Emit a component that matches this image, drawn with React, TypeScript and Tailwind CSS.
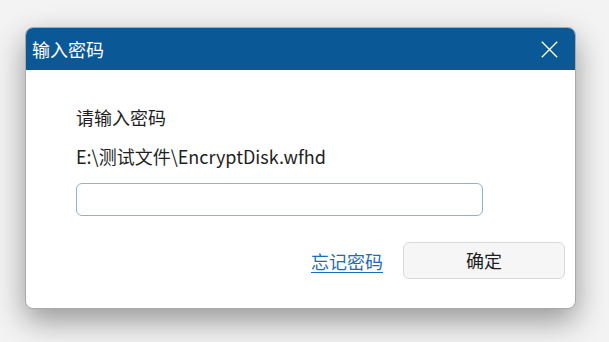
import React from "react";

export default function App() {
  return (
    <div className="w-[609px] h-[342px] bg-[#f3f3f3] pt-[27px] pl-[25px] overflow-hidden" style={{ fontFamily: '"Microsoft YaHei", "Noto Sans CJK SC", "Noto Sans", sans-serif' }}>
      <div className="w-[551px] h-[282px] bg-white border border-[#a9a9a9] rounded-[8px] overflow-hidden shadow-[0_12px_30px_rgba(0,0,0,0.38)] flex flex-col">
        <div className="h-[42px] bg-[#0a5996] flex items-center justify-between pl-[6px] pr-[17px] shrink-0">
          <span className="text-white text-[18px] leading-none">输入密码</span>
          <svg width="17" height="17" viewBox="0 0 17 17">
            <path d="M0.8 0.8 L16.2 16.2 M16.2 0.8 L0.8 16.2" stroke="#ffffff" strokeWidth="1.3" fill="none" />
          </svg>
        </div>
        <div className="flex flex-col pl-[50px] pr-[10px] pt-[37px]">
          <div className="text-[18px] leading-[20px] text-[#1f1f1f]">请输入密码</div>
          <div className="text-[18px] leading-[20px] text-[#1f1f1f] mt-[19px]">E:\测试文件\EncryptDisk.wfhd</div>
          <div className="w-[407px] h-[33px] mt-[17px] border border-[#8cb3d6] rounded-[6px] bg-white" />
          <div className="flex justify-end items-center mt-[26px]">
            <span className="text-[18px] leading-[22px] text-[#1c6db5] underline underline-offset-[3px] mr-[20px]">忘记密码</span>
            <div className="w-[162px] h-[37px] bg-[#f6f6f6] border border-[#dadada] rounded-[6px] flex items-center justify-center text-[18px] text-[#1f1f1f]">确定</div>
          </div>
        </div>
      </div>
    </div>
  );
}
